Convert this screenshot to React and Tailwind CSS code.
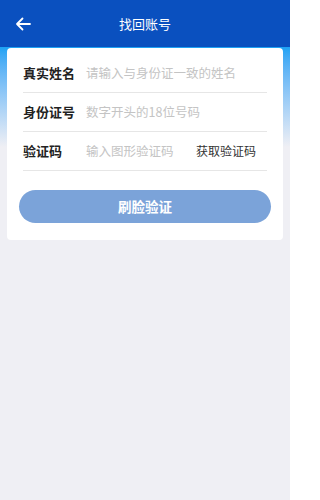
import React from "react";

const fields = [
  { label: "真实姓名", placeholder: "请输入与身份证一致的姓名" },
  { label: "身份证号", placeholder: "数字开头的18位号码" },
];

export default function App() {
  return (
    <div
      className="min-h-[500px] w-[290px] bg-[#efeff4] relative"
      style={{ fontFamily: '"Noto Sans CJK SC", "Noto Sans", sans-serif' }}
    >
      {/* header */}
      <div className="h-[47px] bg-[#0a50bf] flex items-center relative">
        <svg
          className="absolute left-[15px] top-[17px]"
          width="16"
          height="14"
          viewBox="0 0 16 14"
          fill="none"
          stroke="white"
          strokeWidth="1.8"
          strokeLinecap="round"
          strokeLinejoin="round"
        >
          <path d="M15 7H2M7.5 1.5L2 7l5.5 5.5" />
        </svg>
        <div className="flex-1 text-center text-white text-[13px] leading-none">找回账号</div>
      </div>
      <div className="h-[100px] bg-gradient-to-b from-[#1ba2f4] to-[#efeff4]" />

      {/* card */}
      <div className="absolute left-[7px] right-[7px] top-[48px] bg-white rounded-[4px] px-[16px] pt-[6px] pb-[17px]">
        {fields.map((f) => (
          <div key={f.label} className="h-[39px] flex items-center border-b border-[#e6e6e6]">
            <span className="w-[63px] text-[13px] font-bold text-[#222]">{f.label}</span>
            <span className="text-[12.5px] text-[#c4c4c4]">{f.placeholder}</span>
          </div>
        ))}
        <div className="h-[39px] flex items-center border-b border-[#e6e6e6]">
          <span className="w-[63px] text-[13px] font-bold text-[#222]">验证码</span>
          <span className="flex-1 text-[12.5px] text-[#c4c4c4]">输入图形验证码</span>
          <span className="text-[12px] text-[#333] mr-[11px]">获取验证码</span>
        </div>
        <button className="mt-[19px] -mx-[4px] w-[calc(100%+8px)] h-[33px] rounded-full bg-[#7ba3d9] text-white text-[13.5px] font-bold flex items-center justify-center">
          刷脸验证
        </button>
      </div>
    </div>
  );
}
